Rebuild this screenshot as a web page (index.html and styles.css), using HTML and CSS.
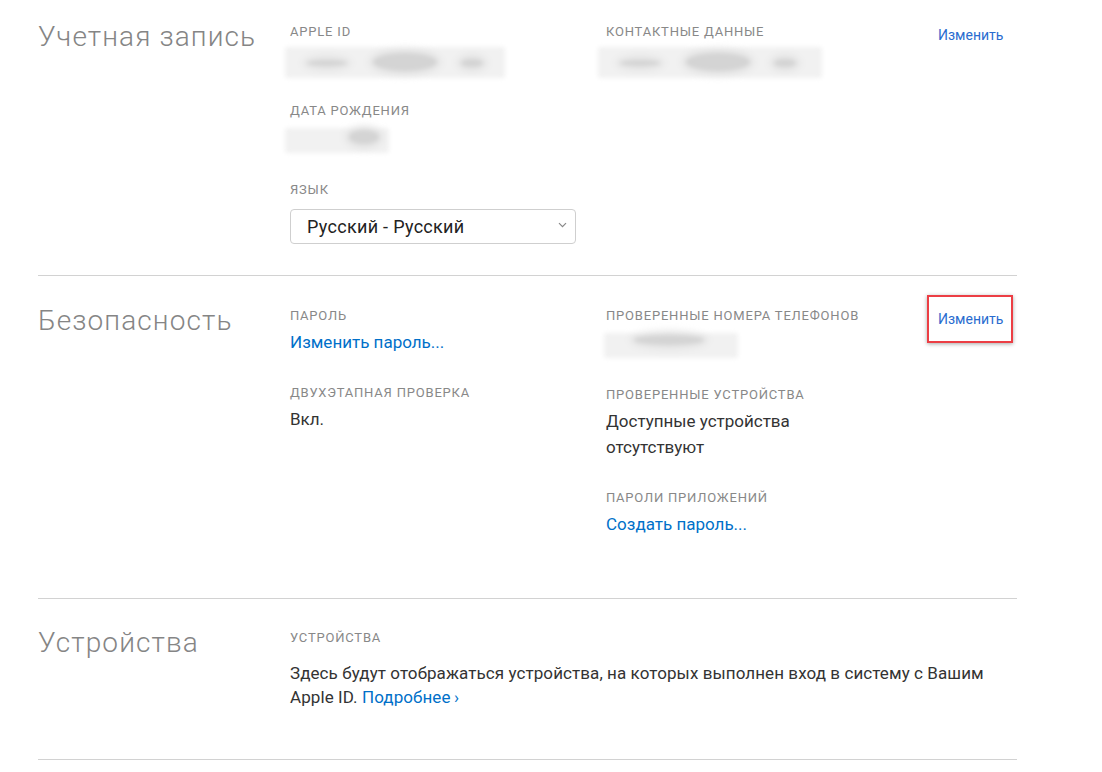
FILE: index.html
```html
<!DOCTYPE html>
<html lang="ru">
<head>
<meta charset="utf-8">
<title>Apple ID</title>
<link rel="stylesheet" href="styles.css">
</head>
<body>
<main class="page">
  <section class="section section-first">
    <h2 class="section-title">Учетная запись</h2>
    <div class="col">
      <div class="field">
        <div class="label">APPLE ID</div>
        <div class="blur-slot"><div class="blur blur-appleid"><span class="b b1"></span><span class="b b2"></span><span class="b b3"></span></div></div>
      </div>
      <div class="field">
        <div class="label">ДАТА РОЖДЕНИЯ</div>
        <div class="blur-slot"><div class="blur blur-birth"><span class="b b4"></span></div></div>
      </div>
      <div class="field">
        <div class="label">ЯЗЫК</div>
        <div class="select">
          <span>Русский - Русский</span>
          <svg class="chev" width="9" height="6" viewBox="0 0 9 6"><path d="M1 1.2l3.5 3.5 3.5-3.5" fill="none" stroke="#888" stroke-width="1.2"/></svg>
        </div>
      </div>
    </div>
    <div class="col">
      <div class="field">
        <div class="label">КОНТАКТНЫЕ ДАННЫЕ</div>
        <div class="blur-slot"><div class="blur blur-contact"><span class="b b1"></span><span class="b b2"></span><span class="b b3"></span></div></div>
      </div>
    </div>
    <div class="action"><a class="edit">Изменить</a></div>
  </section>

  <section class="section section-security">
    <h2 class="section-title">Безопасность</h2>
    <div class="col">
      <div class="field">
        <div class="label">ПАРОЛЬ</div>
        <a class="link value">Изменить пароль...</a>
      </div>
      <div class="field">
        <div class="label">ДВУХЭТАПНАЯ ПРОВЕРКА</div>
        <div class="value">Вкл.</div>
      </div>
    </div>
    <div class="col">
      <div class="field">
        <div class="label">ПРОВЕРЕННЫЕ НОМЕРА ТЕЛЕФОНОВ</div>
        <div class="blur-slot"><div class="blur blur-phone"><span class="b b5"></span></div></div>
      </div>
      <div class="field">
        <div class="label">ПРОВЕРЕННЫЕ УСТРОЙСТВА</div>
        <div class="value">Доступные устройства<br>отсутствуют</div>
      </div>
      <div class="field">
        <div class="label">ПАРОЛИ ПРИЛОЖЕНИЙ</div>
        <a class="link value">Создать пароль...</a>
      </div>
    </div>
    <div class="action"><a class="edit edit-highlight">Изменить</a></div>
  </section>

  <section class="section section-devices">
    <h2 class="section-title">Устройства</h2>
    <div class="col col-wide">
      <div class="field">
        <div class="label">УСТРОЙСТВА</div>
        <p class="value value-para">Здесь будут отображаться устройства, на которых выполнен вход в систему с Вашим<br>Apple&nbsp;ID. <a class="link">Подробнее&#8201;›</a></p>
      </div>
    </div>
  </section>
</main>
</body>
</html>
```

FILE: styles.css
```css
* { box-sizing: border-box; }
html, body { margin: 0; background: #fff; }
body {
  font-family: Roboto, "Liberation Sans", Arial, sans-serif;
  color: #333;
}
.page {
  width: 979px;
  margin-left: 38px;
}
.section {
  display: grid;
  grid-template-columns: 252px 316px 332px 79px;
  border-bottom: 1px solid #d2d2d2;
}
.section-first { padding-top: 23px; padding-bottom: 31px; }
.section-security { padding-top: 31px; padding-bottom: 61px; }
.section-devices { padding-top: 30px; padding-bottom: 50px; }
.section-title {
  margin: 0;
  font-weight: 300;
  font-size: 28px;
  line-height: 28px;
  color: #858585;
  letter-spacing: 1.1px;
  white-space: nowrap;
}
.col { display: flex; flex-direction: column; gap: 29px; }
.col-wide { grid-column: 2 / 5; }
.field { display: flex; flex-direction: column; }
.label {
  font-size: 13px;
  line-height: 18px;
  color: #888;
  letter-spacing: 0.8px;
  text-transform: uppercase;
}
.value {
  margin: 4px 0 0;
  font-size: 17px;
  line-height: 26px;
  color: #333;
}
.value-para {
  margin-top: 14px;
  line-height: 24px;
  letter-spacing: 0.08px;
}
.link { color: #0070c9; text-decoration: none; }
.value.link { display: block; }
.action { display: flex; align-items: flex-start; }
.edit {
  font-size: 14px;
  color: #2a6ccf;
  line-height: 18px;
  margin-top: 3px;
}
.edit-highlight { position: relative; }
.edit-highlight::after {
  content: "";
  position: absolute;
  left: -11px;
  right: -10px;
  top: -15px;
  bottom: -15px;
  border: 2px solid #ec3e44;
  box-shadow: 0 1px 4px rgba(0,0,0,0.35);
}
.select {
  margin-top: 10px;
  width: 286px;
  height: 35px;
  border: 1px solid #cfcfcf;
  border-radius: 4px;
  display: flex;
  align-items: center;
  justify-content: space-between;
  padding: 0 8px 0 16px;
  font-size: 18px;
  letter-spacing: 0.3px;
  color: #222;
}
.chev { margin-top: -4px; }
.blur-slot { height: 32px; position: relative; }
.blur {
  position: absolute;
  top: 7px;
  height: 25px;
  background: #f1f1f1;
  filter: blur(2px);
  border-radius: 3px;
}
.blur-appleid { width: 220px; left: -5px; height: 31px; top: 6px; }
.blur-contact { width: 224px; left: -8px; height: 31px; top: 6px; }
.blur-birth { width: 104px; left: -5px; top: 8px; }
.blur-phone { width: 134px; left: -2px; top: 8px; }
.b {
  position: absolute;
  border-radius: 50%;
  background: #d4d4d4;
  box-shadow: 0 0 6px 4px #e2e2e2;
}
.b1 { left: 22px; top: 13px; width: 40px; height: 6px; }
.b2 { left: 88px; top: 6px; width: 64px; height: 18px; }
.b3 { left: 176px; top: 12px; width: 22px; height: 8px; }
.b4 { left: 64px; top: 2px; width: 30px; height: 14px; }
.b5 { left: 30px; top: 2px; width: 70px; height: 10px; }
```
